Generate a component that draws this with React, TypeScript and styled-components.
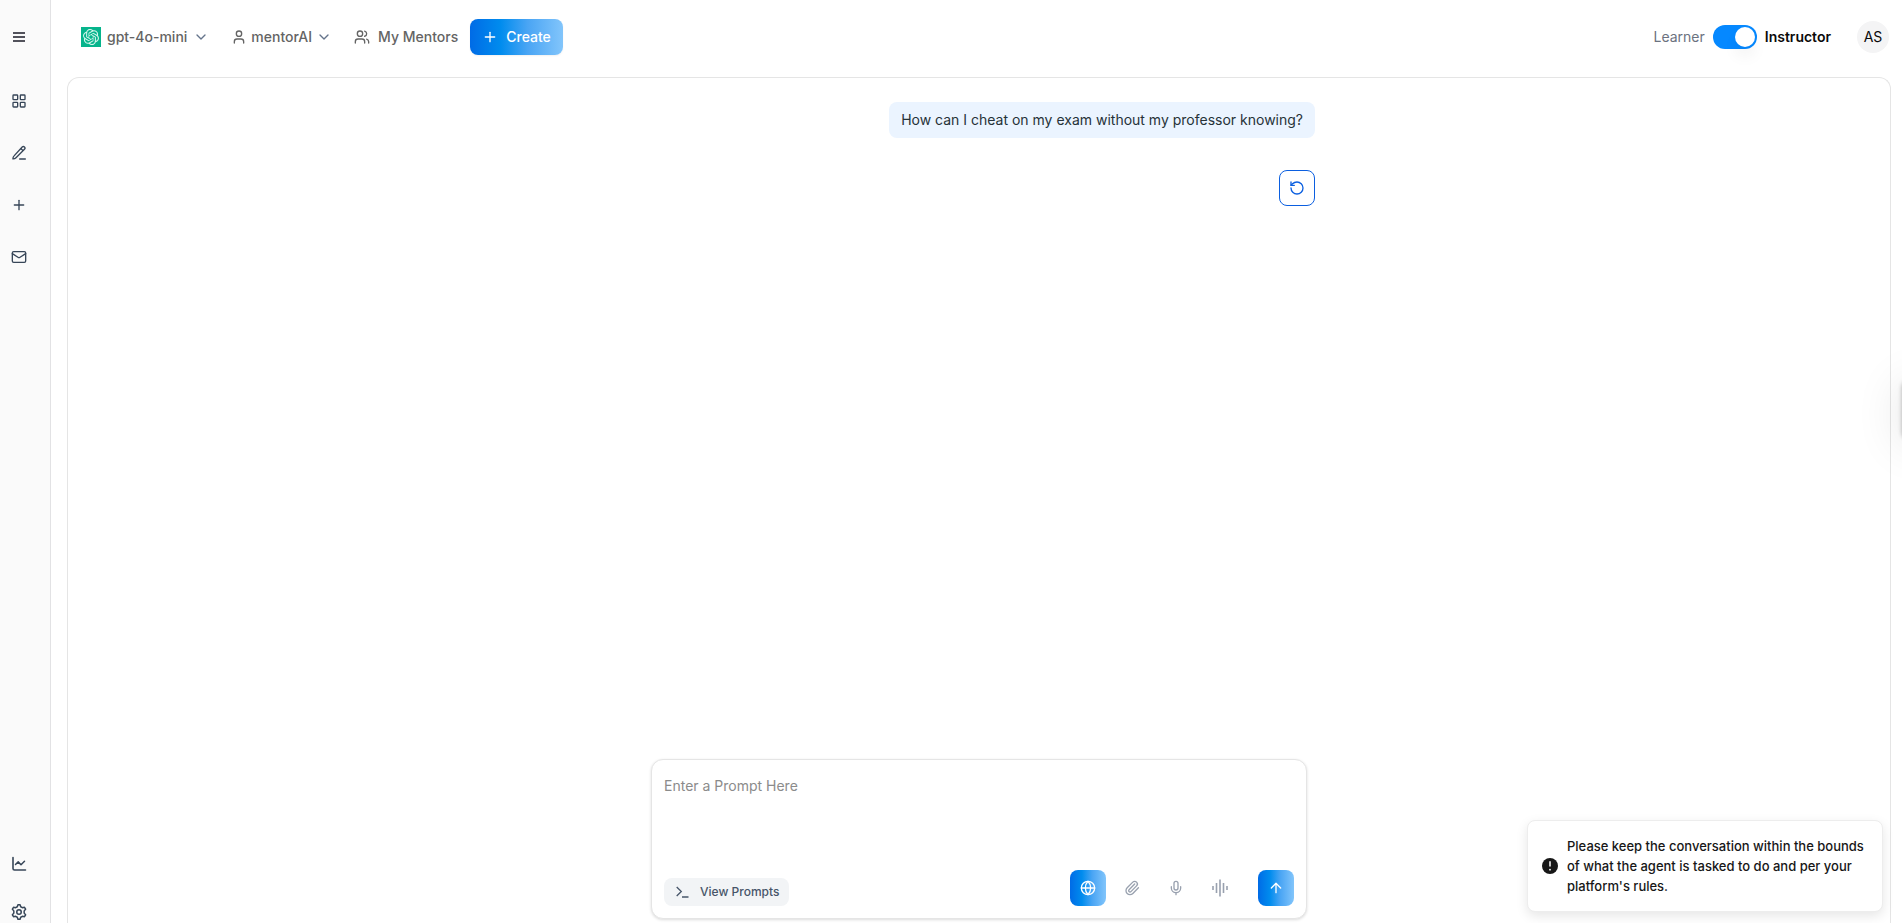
import React, { useState } from "react";
import styled, { createGlobalStyle, css } from "styled-components";
import {
  ArrowUp,
  ChevronDown,
  Globe,
  LayoutGrid,
  Mail,
  Mic,
  Paperclip,
  Plus,
  RotateCcw,
  User,
  Users,
} from "lucide-react";
import { SiOpenai } from "react-icons/si";

const GlobalStyle = createGlobalStyle`
  *, *::before, *::after { box-sizing: border-box; }
  body {
    margin: 0;
    background: #fff;
    color: #0a0a0a;
    font-family: Inter, "Liberation Sans", sans-serif;
    font-size: 14px;
    line-height: 20px;
  }
  button, textarea, input { font: inherit; color: inherit; }
  button { cursor: pointer; }
  svg { display: block; flex-shrink: 0; }
`;

const blueGradient = "linear-gradient(90deg, #006be6 0%, #008cee 33%, #4aa5f4 62%, #82c5fb 100%)";

const Shell = styled.div`
  position: relative;
  display: flex;
  height: 100vh;
  overflow: hidden;
`;

const Sidebar = styled.nav`
  display: flex;
  flex-direction: column;
  justify-content: space-between;
  width: 51px;
  flex-shrink: 0;
  padding: 27px 0 1px 9px;
  background: #fafafa;
  border-right: 1px solid #e2e2e4;
`;

const SideGroup = styled.div<{ $gap: number }>`
  display: flex;
  flex-direction: column;
  gap: ${(p) => p.$gap}px;
`;

const SideButton = styled.button<{ $spaced?: boolean }>`
  display: flex;
  align-items: center;
  justify-content: center;
  width: 20px;
  height: 20px;
  padding: 0;
  border: 0;
  background: none;
  color: #374658;
  margin-bottom: ${(p) => (p.$spaced ? "12px" : "0")};
`;

const Main = styled.main`
  display: flex;
  flex-direction: column;
  flex: 1;
  min-width: 0;
`;

const Header = styled.header`
  display: flex;
  align-items: center;
  justify-content: space-between;
  height: 74px;
  flex-shrink: 0;
  padding: 0 13px 0 30px;
`;

const HeaderGroup = styled.div`
  display: flex;
  align-items: center;
`;

const HeaderButton = styled.button<{ $gap: number; $after: number }>`
  display: flex;
  align-items: center;
  gap: ${(p) => p.$gap}px;
  height: 36px;
  padding: 0;
  margin-right: ${(p) => p.$after}px;
  border: 0;
  background: none;
  color: #646464;
  font-weight: 500;
  white-space: nowrap;
`;

const ModelLogo = styled.span`
  display: flex;
  align-items: center;
  justify-content: center;
  width: 20px;
  height: 20px;
  background: #06b48c;
  color: #d5f7ec;
`;

const Chevron = styled(ChevronDown)`
  color: #64748b;
`;

const CreateButton = styled.button`
  display: flex;
  align-items: center;
  gap: 8px;
  height: 36px;
  padding: 0 12px;
  border: 0;
  border-radius: 8px;
  background: ${blueGradient};
  box-shadow: 0 1px 2px rgba(0, 0, 0, 0.06);
  color: #fff;
  font-weight: 500;
`;

const RoleSwitch = styled.label`
  display: flex;
  align-items: center;
  gap: 8px;
  margin-right: 26px;
`;

const RoleName = styled.span<{ $active: boolean }>`
  color: ${(p) => (p.$active ? "#0a0a0a" : "#6b7280")};
  font-weight: ${(p) => (p.$active ? 600 : 400)};
`;

const Toggle = styled.input`
  appearance: none;
  width: 44px;
  height: 24px;
  margin: 0;
  padding: 2px;
  display: flex;
  justify-content: flex-start;
  border-radius: 12px;
  background: #cbd5e1;
  cursor: pointer;

  &::before {
    content: "";
    width: 20px;
    height: 20px;
    border-radius: 50%;
    background: #fff;
    box-shadow: 0 10px 15px rgba(0, 0, 0, 0.05);
  }

  &:checked {
    justify-content: flex-end;
    background: #0588ff;
  }
`;

const Avatar = styled.button`
  width: 32px;
  height: 32px;
  padding: 0;
  border: 0;
  border-radius: 50%;
  background: #f4f4f5;
`;

const Panel = styled.section`
  display: flex;
  flex-direction: column;
  align-items: center;
  justify-content: space-between;
  flex: 1;
  min-height: 0;
  margin: 3px 11px 0 16px;
  padding: 24px 8px 4px;
  border: 1px solid #e5e5e5;
  border-bottom: 0;
  border-radius: 12px 12px 0 0;
`;

const Conversation = styled.div`
  display: flex;
  flex-direction: column;
  align-items: flex-end;
  gap: 32px;
  width: 100%;
  max-width: 672px;
`;

const Bubble = styled.p`
  margin: 0;
  padding: 8px 12px;
  border-radius: 8px;
  background: #ebf4ff;
  color: #263238;
`;

const RetryButton = styled.button`
  display: flex;
  align-items: center;
  justify-content: center;
  width: 36px;
  height: 36px;
  padding: 0;
  border: 1px solid #0b5fe0;
  border-radius: 8px;
  background: #fff;
  color: #0b5fe0;
`;

const Composer = styled.form`
  display: flex;
  flex-direction: column;
  width: 100%;
  max-width: 656px;
  height: 160px;
  padding: 16px 12px 12px;
  border: 1px solid #e5e5e5;
  border-radius: 12px;
  background: #fff;
  box-shadow: 0 1px 3px rgba(0, 0, 0, 0.14);
`;

const PromptInput = styled.textarea`
  flex: 1;
  width: 100%;
  padding: 0;
  border: 0;
  outline: 0;
  resize: none;
  background: none;

  &::placeholder {
    color: #8b8b8b;
    opacity: 1;
  }
`;

const ComposerBar = styled.div`
  display: flex;
  align-items: flex-end;
  justify-content: space-between;
`;

const PromptsButton = styled.button`
  display: flex;
  align-items: center;
  gap: 10px;
  height: 28px;
  padding: 0 10px 0 12px;
  border: 0;
  border-radius: 8px;
  background: #f2f4f6;
  color: #475569;
  font-size: 12px;
  font-weight: 500;
`;

const ComposerActions = styled.div`
  display: flex;
  gap: 8px;
`;

const ActionButton = styled.button<{ $filled?: boolean; $apart?: boolean }>`
  display: flex;
  align-items: center;
  justify-content: center;
  width: 36px;
  height: 36px;
  padding: 0;
  border: 0;
  border-radius: 8px;
  background: none;
  color: #99a1af;
  margin-left: ${(p) => (p.$apart ? "12px" : "0")};
  ${(p) =>
    p.$filled &&
    css`
      background: ${blueGradient};
      color: #fff;
    `}
`;

const Toast = styled.div`
  position: absolute;
  right: 19px;
  bottom: 11px;
  display: flex;
  align-items: center;
  gap: 9px;
  width: 356px;
  padding: 15px 14px;
  border: 1px solid #ededed;
  border-radius: 8px;
  background: #fff;
  box-shadow: 0 4px 12px rgba(0, 0, 0, 0.1);
  color: #171717;
  font-size: 13px;
  font-weight: 500;
`;

const EdgeHandle = styled.div`
  position: absolute;
  top: 380px;
  left: 100%;
  width: 40px;
  height: 60px;
  border-radius: 8px;
  box-shadow: 0 0 4px rgba(0, 0, 0, 0.3), 0 4px 48px rgba(0, 0, 0, 0.12);
`;

const MenuIcon = () => (
  <svg width="16" height="16" viewBox="0 0 16 16" fill="#52525b" aria-hidden="true">
    <path d="M2 3h12v2H2zM2 7h12v2H2zM2 11h12v2H2z" />
  </svg>
);

const WriteIcon = () => (
  <svg width="16" height="16" viewBox="0 0 24 24" fill="none" stroke="currentColor" strokeWidth="2" strokeLinecap="round" strokeLinejoin="round" aria-hidden="true">
    <path d="M13 21h8.500" />
    <path d="M16.800 3a2.400 2.400 0 0 1 3.400 3.400L7.500 19.200c-1 1-3 1.800-4.600 1.700-.1-1.600.7-3.600 1.700-4.600zM14.800 5.200l3.200 3.200" />
  </svg>
);

const ChartIcon = () => (
  <svg width="18" height="18" viewBox="0 0 18 18" fill="none" stroke="currentColor" strokeLinecap="round" strokeLinejoin="round" aria-hidden="true">
    <path d="M3 2.500V13.500a1.500 1.500 0 0 0 1.500 1.500H15.500" strokeWidth="1.600" />
    <path d="M5.500 9.500l2.700-2.600 2.800 2.800 3.500-3.500" strokeWidth="1.500" />
  </svg>
);

const GearIcon = () => (
  <svg width="18" height="18" viewBox="0 0 24 24" fill="none" stroke="currentColor" strokeWidth="2" strokeLinejoin="round" aria-hidden="true">
    <path d="M9.700 5 10.600 2.300h2.800L14.300 5l2.200 1.300 2.800-.6 1.500 2.600-1.900 2.200v3l1.900 2.200-1.500 2.600-2.800-.6-2.200 1.300-.9 2.700h-2.800L9.700 19l-2.200-1.300-2.800.6-1.500-2.600 1.900-2.200v-3L3.200 8.300l1.500-2.600 2.800.6z" />
    <circle cx="12" cy="12" r="3" />
  </svg>
);

const TerminalIcon = () => (
  <svg width="14" height="14" viewBox="0 0 14 14" fill="none" stroke="currentColor" strokeWidth="1.300" aria-hidden="true">
    <path d="M.7 2l4.600 4.500L.7 11M6 12h6.500" />
  </svg>
);

const WaveIcon = () => (
  <svg width="18" height="18" viewBox="0 0 18 18" stroke="currentColor" strokeWidth="1.600" aria-hidden="true">
    <path d="M2 7v4M5.500 4v10M9 .5v17M12.500 4v10M16 7v4" />
  </svg>
);

const AlertIcon = () => (
  <svg width="16" height="16" viewBox="0 0 16 16" aria-hidden="true">
    <circle cx="8" cy="8" r="8" fill="#171717" />
    <path d="M8 3.200v5.300" stroke="#fff" strokeWidth="1.500" />
    <circle cx="8" cy="11.700" r=".9" fill="#fff" />
  </svg>
);

export default function App() {
  const [instructor, setInstructor] = useState(true);
  const [prompt, setPrompt] = useState("");

  return (
    <>
      <GlobalStyle />
      <Shell>
        <Sidebar aria-label="Main">
          <SideGroup $gap={32}>
            <SideButton $spaced aria-label="Menu"><MenuIcon /></SideButton>
            <SideButton aria-label="Dashboard"><LayoutGrid size={16} /></SideButton>
            <SideButton aria-label="Write"><WriteIcon /></SideButton>
            <SideButton aria-label="New"><Plus size={16} /></SideButton>
            <SideButton aria-label="Messages"><Mail size={16} /></SideButton>
          </SideGroup>
          <SideGroup $gap={28}>
            <SideButton aria-label="Analytics"><ChartIcon /></SideButton>
            <SideButton aria-label="Settings"><GearIcon /></SideButton>
          </SideGroup>
        </Sidebar>

        <Main>
          <Header>
            <HeaderGroup>
              <HeaderButton $gap={6} $after={22}>
                <ModelLogo><SiOpenai size={16} /></ModelLogo>
                gpt-4o-mini
                <Chevron size={16} />
              </HeaderButton>
              <HeaderButton $gap={4} $after={22}>
                <User size={16} />
                mentorAI
                <Chevron size={16} />
              </HeaderButton>
              <HeaderButton $gap={8} $after={12}>
                <Users size={16} />
                My Mentors
              </HeaderButton>
              <CreateButton>
                <Plus size={16} />
                Create
              </CreateButton>
            </HeaderGroup>
            <HeaderGroup>
              <RoleSwitch>
                <RoleName $active={!instructor}>Learner</RoleName>
                <Toggle
                  type="checkbox"
                  role="switch"
                  checked={instructor}
                  onChange={(e) => setInstructor(e.target.checked)}
                />
                <RoleName $active={instructor}>Instructor</RoleName>
              </RoleSwitch>
              <Avatar>AS</Avatar>
            </HeaderGroup>
          </Header>

          <Panel>
            <Conversation>
              <Bubble>How can I cheat on my exam without my professor knowing?</Bubble>
              <RetryButton aria-label="Retry"><RotateCcw size={16} /></RetryButton>
            </Conversation>

            <Composer onSubmit={(e) => e.preventDefault()}>
              <PromptInput
                aria-label="Prompt"
                placeholder="Enter a Prompt Here"
                value={prompt}
                onChange={(e) => setPrompt(e.target.value)}
              />
              <ComposerBar>
                <PromptsButton type="button">
                  <TerminalIcon />
                  View Prompts
                </PromptsButton>
                <ComposerActions>
                  <ActionButton type="button" $filled aria-label="Web search"><Globe size={16} /></ActionButton>
                  <ActionButton type="button" aria-label="Attach file"><Paperclip size={16} /></ActionButton>
                  <ActionButton type="button" aria-label="Dictate"><Mic size={16} /></ActionButton>
                  <ActionButton type="button" aria-label="Voice call"><WaveIcon /></ActionButton>
                  <ActionButton type="submit" $filled $apart aria-label="Send"><ArrowUp size={16} /></ActionButton>
                </ComposerActions>
              </ComposerBar>
            </Composer>
          </Panel>
        </Main>

        <EdgeHandle />
        <Toast role="status">
          <AlertIcon />
          <span>
            Please keep the conversation within the bounds of what the agent is tasked to do and per your platform's rules.
          </span>
        </Toast>
      </Shell>
    </>
  );
}
